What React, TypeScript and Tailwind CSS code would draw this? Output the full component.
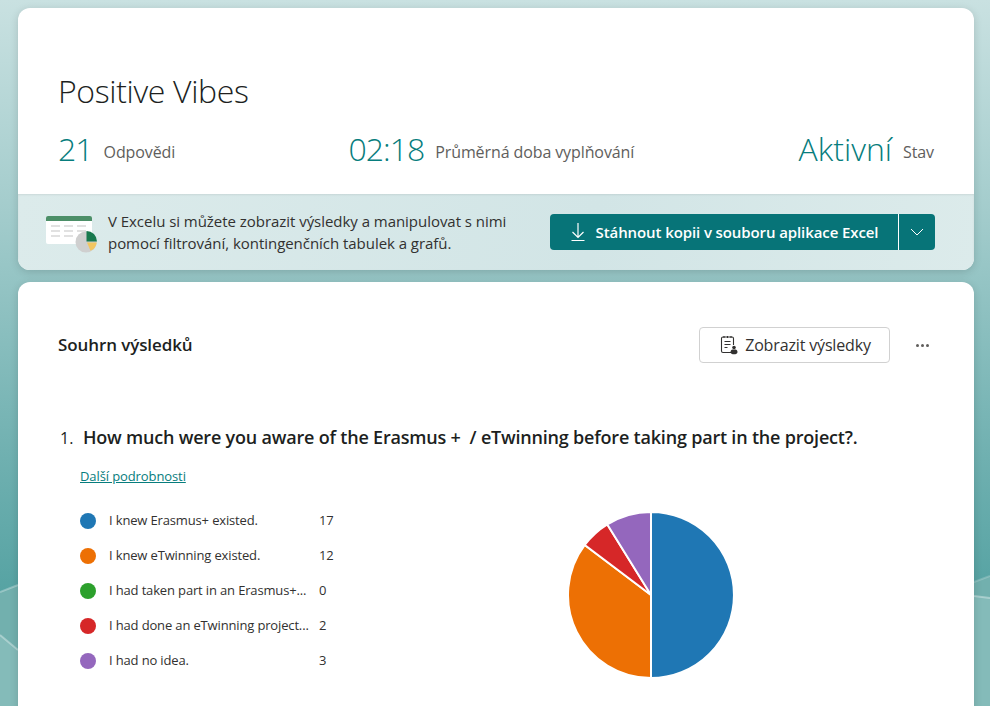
const legend = [
  { color: "bg-[#1f77b4]", label: "I knew Erasmus+ existed.", count: 17 },
  { color: "bg-[#ed7004]", label: "I knew eTwinning existed.", count: 12 },
  { color: "bg-[#2ca02c]", label: "I had taken part in an Erasmus+...", count: 0 },
  { color: "bg-[#d62728]", label: "I had done an eTwinning project...", count: 2 },
  { color: "bg-[#9467bd]", label: "I had no idea.", count: 3 },
]

// the lower part of the page background, only its edges show beside the cards
function Waves() {
  return (
    <svg width="990" height="706" viewBox="0 0 990 706" className="absolute inset-0">
      <path d="M0 592 18 585 500 500 974 582 990 576V706H0z" fill="#72b0ae" />
      <path d="M0 635 18 650 500 640 974 596 990 598V706H0z" fill="#84bbb9" />
      <path d="M0 592 18 585" stroke="#ffffff" strokeOpacity="0.3" strokeWidth="2" fill="none" />
      <path d="M0 635 18 650" stroke="#ffffff" strokeOpacity="0.35" strokeWidth="2" fill="none" />
      <path d="M974 582 990 576" stroke="#ffffff" strokeOpacity="0.2" strokeWidth="2" fill="none" />
      <path d="M974 596 990 598" stroke="#ffffff" strokeOpacity="0.35" strokeWidth="2" fill="none" />
    </svg>
  )
}

function ExcelArt() {
  return (
    <svg width="54" height="37" viewBox="0 0 54 37" className="mt-[5px] shrink-0">
      <rect x="0" y="0" width="46" height="28" rx="2" fill="#ffffff" />
      <path d="M0 5V2a2 2 0 0 1 2-2h42a2 2 0 0 1 2 2v3z" fill="#4c8f68" />
      <g fill="#e1e1e1">
        <rect x="5" y="9" width="9" height="2" />
        <rect x="18" y="9" width="9" height="2" />
        <rect x="31" y="9" width="9" height="2" />
        <rect x="5" y="14" width="9" height="2" />
        <rect x="18" y="14" width="9" height="2" />
        <rect x="31" y="14" width="9" height="2" />
        <rect x="5" y="19" width="9" height="2" />
        <rect x="18" y="19" width="9" height="2" />
      </g>
      <circle cx="40" cy="26" r="10.500" fill="#cfcfcf" />
      <path d="M40.500 15a10.500 10.500 0 0 1 10.500 10.500H40.500z" fill="#18794e" />
      <path d="M41 26.500h9.800a10.500 10.500 0 0 1-6.300 8.300z" fill="#f2c661" />
    </svg>
  )
}

function DownloadIcon() {
  return (
    <svg width="16" height="20" viewBox="0 0 16 20" fill="none" stroke="#ffffff" strokeWidth="1.2">
      <path d="M8 1v14M2.500 10 8 15.500 13.500 10M1.500 18.500h13" />
    </svg>
  )
}

function ResultsIcon() {
  return (
    <svg width="18" height="20" viewBox="0 0 18 20" fill="none" stroke="#323130" strokeWidth="1.1">
      <path d="M11 17.500H3a1.500 1.500 0 0 1-1.500-1.500V3.500A1.500 1.500 0 0 1 3 2h9a1.500 1.500 0 0 1 1.500 1.500V10" />
      <path d="M4 1v2M7.500 1v2M11 1v2M4.500 6.500h6M4.500 9.500h6M4.500 12.500h3" />
      <circle cx="14" cy="12.500" r="1.800" fill="#323130" stroke="none" />
      <path d="M10.500 17c0-1.500 1-2.500 2-2.500h3c1 0 2 1 2 2.500 0 1.500-1.500 2.300-3.500 2.300s-3.500-.8-3.500-2.300z" fill="#323130" stroke="none" />
    </svg>
  )
}

function Pie() {
  // 17 / 12 / 2 / 3 of 34 answers
  const cx = 83
  const cy = 83
  const r = 83
  const slices = [
    { n: 17, fill: "#1f77b4" },
    { n: 12, fill: "#ed7004" },
    { n: 2, fill: "#d62728" },
    { n: 3, fill: "#9467bd" },
  ]
  let acc = 0
  return (
    <svg width="166" height="166" viewBox="0 0 166 166">
      {slices.map((s) => {
        const a0 = (acc / 34) * Math.PI * 2
        acc += s.n
        const a1 = (acc / 34) * Math.PI * 2
        const x0 = cx + r * Math.sin(a0)
        const y0 = cy - r * Math.cos(a0)
        const x1 = cx + r * Math.sin(a1)
        const y1 = cy - r * Math.cos(a1)
        return (
          <path
            key={s.fill}
            d={`M${cx} ${cy}L${x0} ${y0}A${r} ${r} 0 ${a1 - a0 > Math.PI ? 1 : 0} 1 ${x1} ${y1}Z`}
            fill={s.fill}
            stroke="#ffffff"
            strokeWidth="2"
          />
        )
      })}
    </svg>
  )
}

function Stat({ value, label, tight, className }: { value: string; label: string; tight?: boolean; className?: string }) {
  return (
    <div className={`flex items-end gap-[11px] ${className ?? ""}`}>
      <span className={`text-[32px] leading-[40px] font-light text-[#077d7d] ${tight ? "tracking-[-1px]" : ""}`}>{value}</span>
      <span className="text-base leading-[34px] tracking-[-0.1px] text-[#605e5c]">{label}</span>
    </div>
  )
}

export default function App() {
  return (
    <div className="relative h-[706px] overflow-hidden bg-[linear-gradient(180deg,#c9e1e1_0%,#a3cccc_30%,#6fb0b0_65%,#56a3a3_84%)] font-['Open_Sans','Liberation_Sans',sans-serif]">
      <Waves />
      <div className="relative mr-4 ml-[18px] pt-2">
        <div className="overflow-hidden rounded-xl bg-white shadow-[0_2px_8px_rgba(0,0,0,0.15)]">
          <div className="px-10 pt-[61px] pb-[25px]">
            <h1 className="text-[32px] leading-[44px] font-light tracking-[-0.35px] text-[#201f1e]">Positive Vibes</h1>
            <div className="mt-4 flex items-center justify-between">
              <Stat value="21" label="Odpovědi" tight />
              <Stat value="02:18" label="Průměrná doba vyplňování" tight className="ml-[9px]" />
              <Stat value="Aktivní" label="Stav" />
            </div>
          </div>
          <div className="flex h-[76px] items-center bg-[linear-gradient(100deg,#dcebeb,#d2e5e6_60%,#dcebeb)] pr-[39px] pl-7 shadow-[inset_0_1px_2px_rgba(0,0,0,0.08)]">
            <ExcelArt />
            <p className="ml-2 w-[420px] text-[15px] leading-[22px] tracking-[-0.04px] text-[#323130]">
              V Excelu si můžete zobrazit výsledky a manipulovat s nimi pomocí filtrování, kontingenčních tabulek a grafů.
            </p>
            <div className="ml-auto flex h-9 w-[385px] rounded bg-[#077478] text-white">
              <button className="flex flex-1 items-center justify-center gap-[10px] border-r border-white text-[15px] font-semibold tracking-[-0.1px]">
                <DownloadIcon />
                Stáhnout kopii v souboru aplikace Excel
              </button>
              <button className="flex w-9 items-center justify-center">
                <svg width="14" height="8" viewBox="0 0 14 8" fill="none" stroke="#ffffff" strokeWidth="1">
                  <path d="M1 1l6 6 6-6" />
                </svg>
              </button>
            </div>
          </div>
        </div>

        <div className="mt-3 h-[500px] rounded-xl bg-white px-10 pt-[45px] shadow-[0_2px_8px_rgba(0,0,0,0.15)]">
          <div className="flex h-9 items-center">
            <h2 className="text-[17px] font-semibold tracking-[-0.1px] text-[#201f1e]">Souhrn výsledků</h2>
            <button className="ml-auto flex h-9 w-[191px] items-center justify-center gap-[7px] rounded border border-[#d1d1d1] pl-[2px] text-base tracking-[-0.15px] text-[#323130]">
              <ResultsIcon />
              Zobrazit výsledky
            </button>
            <div className="mr-[5px] ml-[26px] flex gap-[2px]">
              <span className="size-[3px] rounded-full bg-[#605e5c]" />
              <span className="size-[3px] rounded-full bg-[#605e5c]" />
              <span className="size-[3px] rounded-full bg-[#605e5c]" />
            </div>
          </div>

          <div className="mt-[62px] flex items-baseline pl-[2px] text-[#201f1e]">
            <span className="w-[23px] text-base">1.</span>
            <span className="text-lg leading-6 font-semibold tracking-[-0.2px] whitespace-pre">How much were you aware of the Erasmus +  / eTwinning before taking part in the project?.</span>
          </div>
          <a href="#" className="mt-[17px] ml-[22px] block text-[13px] leading-[18px] tracking-[-0.1px] text-[#077d7d] underline">
            Další podrobnosti
          </a>

          <div className="mt-[25px] flex">
            <ul className="ml-[22px] flex w-[254px] flex-col gap-[18px] pt-[2px]">
              {legend.map((item) => (
                <li key={item.label} className="flex h-[17px] items-center text-[13px] tracking-[-0.15px] text-[#323130]">
                  <span className={`size-4 shrink-0 rounded-full ${item.color}`} />
                  <span className="ml-[13px] w-[210px] whitespace-nowrap">{item.label}</span>
                  <span>{item.count}</span>
                </li>
              ))}
            </ul>
            <div className="mt-[2px] ml-[234px]">
              <Pie />
            </div>
          </div>
        </div>
      </div>
    </div>
  )
}
